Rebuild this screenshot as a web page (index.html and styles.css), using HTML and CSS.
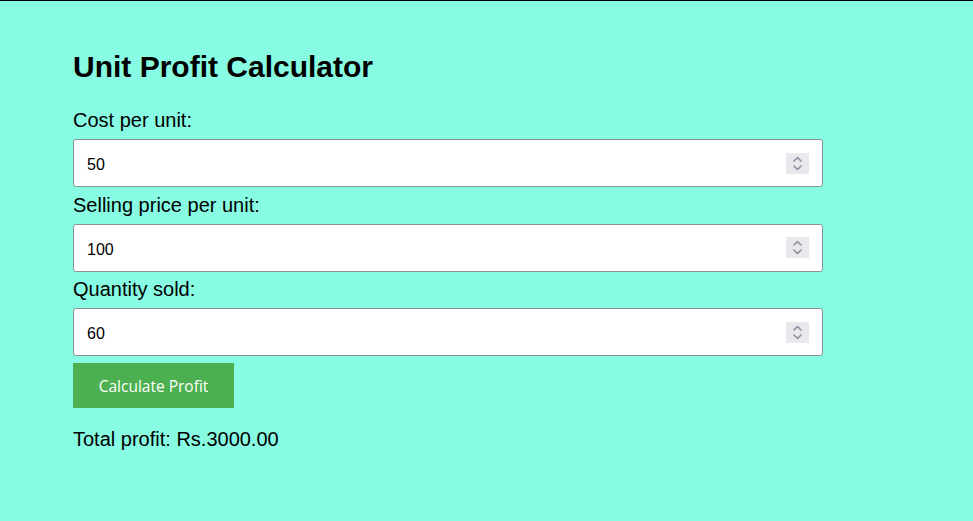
FILE: index.html
```html
<!DOCTYPE html>
<html>
<head>
<meta charset="utf-8">
<link rel="stylesheet" href="styles.css">
</head>
<body>
<div class="page">
  <div class="calc">
    <h1 class="title">Unit Profit Calculator</h1>
    <label class="label" for="cost">Cost per unit:</label>
    <div class="field">
      <input class="num" id="cost" type="text" value="50">
      <span class="spin"><svg width="23" height="21" viewBox="0 0 23 21"><path d="M8 8 L11.5 4.5 L15 8" fill="none" stroke="#8f8f9d" stroke-width="1.6" stroke-linecap="round" stroke-linejoin="round"/><path d="M8 13 L11.5 16.5 L15 13" fill="none" stroke="#8f8f9d" stroke-width="1.6" stroke-linecap="round" stroke-linejoin="round"/></svg></span>
    </div>
    <label class="label" for="price">Selling price per unit:</label>
    <div class="field">
      <input class="num" id="price" type="text" value="100">
      <span class="spin"><svg width="23" height="21" viewBox="0 0 23 21"><path d="M8 8 L11.5 4.5 L15 8" fill="none" stroke="#8f8f9d" stroke-width="1.6" stroke-linecap="round" stroke-linejoin="round"/><path d="M8 13 L11.5 16.5 L15 13" fill="none" stroke="#8f8f9d" stroke-width="1.6" stroke-linecap="round" stroke-linejoin="round"/></svg></span>
    </div>
    <label class="label" for="qty">Quantity sold:</label>
    <div class="field">
      <input class="num" id="qty" type="text" value="60">
      <span class="spin"><svg width="23" height="21" viewBox="0 0 23 21"><path d="M8 8 L11.5 4.5 L15 8" fill="none" stroke="#8f8f9d" stroke-width="1.6" stroke-linecap="round" stroke-linejoin="round"/><path d="M8 13 L11.5 16.5 L15 13" fill="none" stroke="#8f8f9d" stroke-width="1.6" stroke-linecap="round" stroke-linejoin="round"/></svg></span>
    </div>
    <button class="btn" type="button">Calculate Profit</button>
    <p class="result">Total profit: Rs.3000.00</p>
  </div>
</div>
</body>
</html>
```

FILE: styles.css
```css
html, body {
  margin: 0;
  padding: 0;
  background: #87fce3;
}

.page {
  border-top: 1px solid #000;
  min-height: 520px;
  background: #87fce3;
  font-family: "Liberation Sans", Arial, sans-serif;
  color: #000;
}

.calc {
  width: 750px;
  padding: 49px 0 0 73px;
  display: flex;
  flex-direction: column;
}

.title {
  margin: 0 0 23.5px;
  font-size: 30px;
  line-height: 34.5px;
  font-weight: bold;
}

.label {
  display: block;
  font-size: 20px;
  line-height: 23px;
  padding-top: 1px;
  margin-bottom: 7px;
}

.field {
  box-sizing: border-box;
  width: 750px;
  height: 48px;
  border: 1px solid #8f8f9d;
  border-radius: 3px;
  background: #fff;
  display: flex;
  align-items: center;
  padding: 0 13px 0 13px;
  margin-bottom: 5.5px;
}

.num {
  flex: 1;
  border: 0;
  outline: none;
  padding: 4px 0 0;
  margin: 0;
  background: transparent;
  font-family: "Liberation Sans", Arial, sans-serif;
  font-size: 16px;
  color: #000;
}

.spin {
  width: 23px;
  height: 21px;
  background: #e9e9ed;
  display: flex;
}

.btn {
  align-self: flex-start;
  margin-top: 1.5px;
  width: 161px;
  height: 45px;
  border: 0;
  background: #4caf50;
  color: #fff;
  font-family: "Open Sans", "Noto Sans", sans-serif;
  font-size: 15.5px;
  padding: 0;
}

.result {
  margin: 20px 0 0;
  font-size: 20px;
  line-height: 23px;
}
```
